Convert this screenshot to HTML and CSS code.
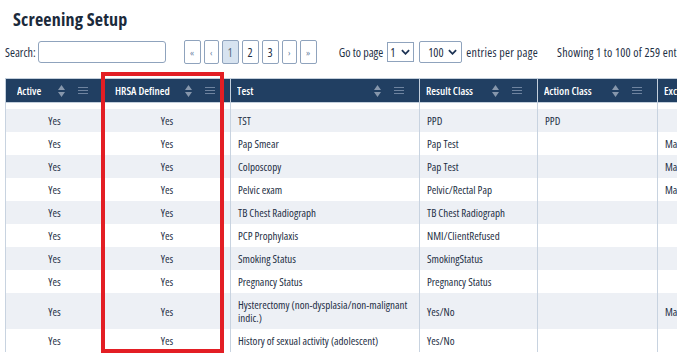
FILE: index.html
```html
<!DOCTYPE html>
<html lang="en">
<head>
    <meta charset="UTF-8">
    <title>Screening Setup</title>
    <link rel="stylesheet" href="styles.css">
</head>
<body>
    <div class="page">
        <h1 class="page-title">Screening Setup</h1>

        <div class="toolbar">
            <label class="search">Search:<input type="text" class="search-input"></label>

            <div class="pager">
                <button class="page-btn arrow">&laquo;</button>
                <button class="page-btn arrow narrow">&lsaquo;</button>
                <button class="page-btn active">1</button>
                <button class="page-btn">2</button>
                <button class="page-btn">3</button>
                <button class="page-btn arrow narrow">&rsaquo;</button>
                <button class="page-btn arrow">&raquo;</button>
            </div>

            <span class="goto">Go to page</span>
            <div class="fake-select small">1
                <svg viewBox="0 0 10 6"><path d="M1 1l4 4 4-4" fill="none" stroke="currentColor" stroke-width="2"/></svg>
            </div>
            <div class="fake-select wide">100
                <svg viewBox="0 0 10 6"><path d="M1 1l4 4 4-4" fill="none" stroke="currentColor" stroke-width="2"/></svg>
            </div>
            <span class="per-page">entries per page</span>
            <span class="showing">Showing 1 to 100 of 259 entries</span>
        </div>

        <table class="grid">
            <colgroup>
                <col style="width: 98px">
                <col style="width: 127px">
                <col style="width: 189px">
                <col style="width: 118px">
                <col style="width: 120px">
                <col style="width: 130px">
            </colgroup>
            <thead>
                <tr>
                    <th class="wide-pad"><div class="th-inner"><span>Active</span>
                        <svg class="sort-icon" viewBox="0 0 7 12"><path d="M3.5 0L7 5H0z M3.5 12L0 7h7z"/></svg>
                        <svg class="menu-icon" viewBox="0 0 10 7"><path d="M0 0.5h10M0 3.5h10M0 6.5h10"/></svg></div></th>
                    <th class="wide-pad"><div class="th-inner"><span>HRSA Defined</span>
                        <svg class="sort-icon" viewBox="0 0 7 12"><path d="M3.5 0L7 5H0z M3.5 12L0 7h7z"/></svg>
                        <svg class="menu-icon" viewBox="0 0 10 7"><path d="M0 0.5h10M0 3.5h10M0 6.5h10"/></svg></div></th>
                    <th><div class="th-inner"><span>Test</span>
                        <svg class="sort-icon" viewBox="0 0 7 12"><path d="M3.5 0L7 5H0z M3.5 12L0 7h7z"/></svg>
                        <svg class="menu-icon" viewBox="0 0 10 7"><path d="M0 0.5h10M0 3.5h10M0 6.5h10"/></svg></div></th>
                    <th><div class="th-inner"><span>Result Class</span>
                        <svg class="sort-icon" viewBox="0 0 7 12"><path d="M3.5 0L7 5H0z M3.5 12L0 7h7z"/></svg>
                        <svg class="menu-icon" viewBox="0 0 10 7"><path d="M0 0.5h10M0 3.5h10M0 6.5h10"/></svg></div></th>
                    <th><div class="th-inner"><span>Action Class</span>
                        <svg class="sort-icon" viewBox="0 0 7 12"><path d="M3.5 0L7 5H0z M3.5 12L0 7h7z"/></svg>
                        <svg class="menu-icon" viewBox="0 0 10 7"><path d="M0 0.5h10M0 3.5h10M0 6.5h10"/></svg></div></th>
                    <th><div class="th-inner"><span>Exclude Gender</span>
                        <svg class="sort-icon" viewBox="0 0 7 12"><path d="M3.5 0L7 5H0z M3.5 12L0 7h7z"/></svg>
                        <svg class="menu-icon" viewBox="0 0 10 7"><path d="M0 0.5h10M0 3.5h10M0 6.5h10"/></svg></div></th>
                </tr>
            </thead>
            <tbody>
                <tr class="spacer"><td></td><td></td><td></td><td></td><td></td><td></td></tr>
                <tr><td class="center">Yes</td><td class="center">Yes</td><td>TST</td><td>PPD</td><td>PPD</td><td></td></tr>
                <tr><td class="center">Yes</td><td class="center">Yes</td><td>Pap Smear</td><td>Pap Test</td><td></td><td>Male</td></tr>
                <tr><td class="center">Yes</td><td class="center">Yes</td><td>Colposcopy</td><td>Pap Test</td><td></td><td>Male</td></tr>
                <tr><td class="center">Yes</td><td class="center">Yes</td><td>Pelvic exam</td><td>Pelvic/Rectal Pap</td><td></td><td>Male</td></tr>
                <tr><td class="center">Yes</td><td class="center">Yes</td><td>TB Chest Radiograph</td><td>TB Chest Radiograph</td><td></td><td></td></tr>
                <tr><td class="center">Yes</td><td class="center">Yes</td><td>PCP Prophylaxis</td><td>NMI/ClientRefused</td><td></td><td></td></tr>
                <tr><td class="center">Yes</td><td class="center">Yes</td><td>Smoking Status</td><td>SmokingStatus</td><td></td><td></td></tr>
                <tr><td class="center">Yes</td><td class="center">Yes</td><td>Pregnancy Status</td><td>Pregnancy Status</td><td></td><td></td></tr>
                <tr><td class="center">Yes</td><td class="center">Yes</td><td>Hysterectomy (non-dysplasia/non-malignant indic.)</td><td>Yes/No</td><td></td><td>Male</td></tr>
                <tr><td class="center">Yes</td><td class="center">Yes</td><td>History of sexual activity (adolescent)</td><td>Yes/No</td><td></td><td></td></tr>
            </tbody>
        </table>

        <div class="highlight-box"></div>
    </div>
</body>
</html>
```
FILE: styles.css
```css
body {
    margin: 0;
    font-family: "Open Sans", "Noto Sans", sans-serif;
    font-stretch: 75%;
    font-size: 11px;
    color: #1e2f45;
    background-color: #ffffff;
    overflow: hidden;
}

.page {
    position: relative;
    width: 900px;
    height: 354px;
    overflow: hidden;
    padding: 0 0 0 5px;
}

.page-title {
    margin: 0;
    padding: 9px 0 0 8px;
    height: 20px;
    font-size: 18px;
    line-height: 20px;
    font-weight: 700;
    letter-spacing: 0.2px;
    color: #1b2a3b;
}

.toolbar {
    display: flex;
    align-items: center;
    height: 24px;
    margin-top: 11px;
    font-size: 12px;
    white-space: nowrap;
}

.search {
    display: flex;
    align-items: center;
    gap: 2px;
}

.search-input {
    width: 128px;
    height: 22px;
    box-sizing: border-box;
    border: 1px solid #8fa3bd;
    border-radius: 3px;
    padding: 0 4px;
    margin: 0;
}

.pager {
    display: flex;
    gap: 3px;
    margin-left: 18px;
}

.page-btn {
    width: 17px;
    height: 24px;
    padding: 0;
    border: 1px solid #8fa3bd;
    border-radius: 2px;
    background-color: #ffffff;
    font-family: inherit;
    font-stretch: 75%;
    font-size: 12px;
    color: #1e2f45;
}

.page-btn.narrow {
    width: 15px;
}

.page-btn.arrow {
    font-size: 9px;
    color: #6b83a2;
}

.page-btn.active {
    background-color: #d7e3f0;
    color: #5a6b80;
}

.goto {
    margin-left: 22px;
}

.fake-select {
    display: flex;
    align-items: center;
    justify-content: space-between;
    box-sizing: border-box;
    border: 1px solid #8fa3bd;
    padding: 0 4px;
    color: #1e2f45;
}

.fake-select svg {
    width: 9px;
    height: 6px;
    color: #1d3354;
}

.fake-select.small {
    width: 27px;
    height: 20px;
    margin-left: 4px;
    padding: 0 3px 0 2px;
}

.fake-select.wide {
    width: 43px;
    height: 22px;
    margin-left: 5px;
    padding: 0 4px 0 8px;
    border-radius: 2px;
}

.per-page {
    margin-left: 4px;
    letter-spacing: 0.3px;
}

.showing {
    margin-left: 19px;
    letter-spacing: 0.2px;
}

.grid {
    margin-top: 14px;
    table-layout: fixed;
    border-collapse: collapse;
    width: 702px;
}

.grid th {
    height: 23px;
    padding: 0;
    background-color: #213f62;
    border: 1px solid #c3cfdc;
    color: #ffffff;
    font-weight: 600;
    text-align: left;
}

.th-inner {
    display: flex;
    align-items: center;
    padding: 0 15px 0 6px;
}

.wide-pad .th-inner {
    padding-left: 11px;
}

.th-inner span {
    flex: 1;
    overflow: hidden;
    white-space: nowrap;
}

.sort-icon {
    width: 7px;
    height: 12px;
    fill: #8797ac;
    flex-shrink: 0;
}

.menu-icon {
    width: 10px;
    height: 7px;
    margin-left: 13px;
    stroke: #6f84a0;
    stroke-width: 1;
    flex-shrink: 0;
}

.grid td {
    padding: 5px 7px;
    line-height: 13px;
    border-left: 1px solid #c8d3e0;
    border-right: 1px solid #c8d3e0;
    vertical-align: middle;
}

.grid td.center {
    text-align: center;
}

.grid tbody tr:nth-child(even) td {
    background-color: #edf0f5;
}

.grid tr.spacer td {
    height: 6px;
    padding: 0;
    background-color: #ffffff;
}

.highlight-box {
    position: absolute;
    left: 101px;
    top: 72px;
    width: 123px;
    height: 281px;
    box-sizing: border-box;
    border: 4px solid #e31e24;
}
```
